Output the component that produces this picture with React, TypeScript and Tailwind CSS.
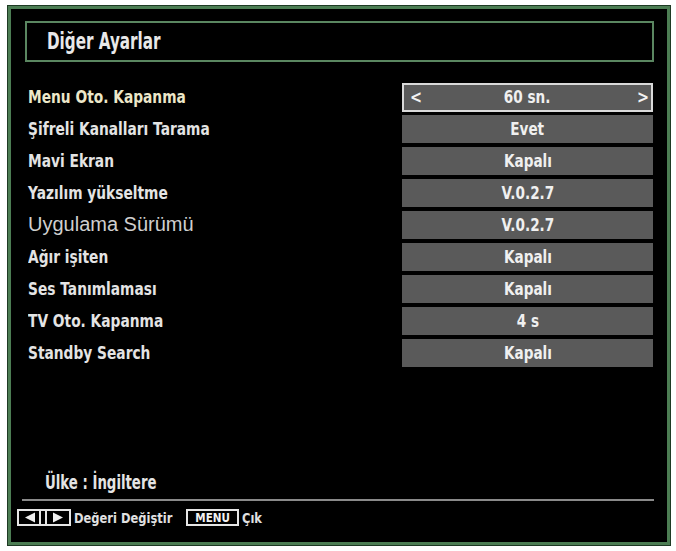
import React from 'react';

interface SettingRow {
  label: string;
  value: string;
  plain?: boolean;
}

const rows: SettingRow[] = [
  { label: 'Menu Oto. Kapanma', value: '60 sn.' },
  { label: 'Şifreli Kanalları Tarama', value: 'Evet' },
  { label: 'Mavi Ekran', value: 'Kapalı' },
  { label: 'Yazılım yükseltme', value: 'V.0.2.7' },
  { label: 'Uygulama Sürümü', value: 'V.0.2.7', plain: true },
  { label: 'Ağır işiten', value: 'Kapalı' },
  { label: 'Ses Tanımlaması', value: 'Kapalı' },
  { label: 'TV Oto. Kapanma', value: '4 s' },
  { label: 'Standby Search', value: 'Kapalı' },
];

// the OSD typeface is a tall, narrow bold face; squeeze DejaVu to get close
const osdFont = 'font-["DejaVu_Sans",sans-serif] font-bold inline-block whitespace-nowrap leading-none';

// left / right arrow key hint
const ArrowKeys: React.FC = () => (
  <svg width="54" height="17" viewBox="0 0 54 17">
    <rect x="1" y="1" width="52" height="15" fill="#000" stroke="#e6e6e6" strokeWidth="2" />
    <polygon points="8,8.5 18,3.5 18,13.5" fill="#f0f0f0" />
    <rect x="22" y="2" width="2" height="13" fill="#e6e6e6" />
    <rect x="28" y="2" width="2" height="13" fill="#e6e6e6" />
    <polygon points="46,8.5 36,3.5 36,13.5" fill="#f0f0f0" />
  </svg>
);

const App: React.FC = () => {
  return (
    <div className="w-[676px] h-[551px] bg-white pt-[5px] pl-[7px] pr-[5px] pb-[5px]">
      <div className="h-full w-full bg-[#1e3a24] p-px">
        <div className="h-full w-full border-[3px] border-[#4c7d53] bg-black flex flex-col">
          {/* header */}
          <div className="mt-[12px] ml-[14px] mr-[13px] h-[41px] border-2 border-[#5a8660] flex items-center pl-[20px]">
            <span className={`${osdFont} origin-left scale-x-[0.66] text-[23px] text-[#e8e8e8]`}>
              Diğer Ayarlar
            </span>
          </div>

          {/* settings list */}
          <div className="mt-[21px] ml-[17px] mr-[14px] flex flex-col gap-[4px]">
            {rows.map((row, i) => (
              <div key={row.label} className="flex items-center h-[28px]">
                <div className="flex-1">
                  <span
                    className={
                      row.plain
                        ? 'font-["Liberation_Sans",Arial,sans-serif] text-[20px] text-[#cfcfcf] leading-none'
                        : `${osdFont} origin-left scale-x-[0.81] text-[17px] ${
                            i === 0 ? 'text-[#ece7c9]' : 'text-[#e4e4e4]'
                          }`
                    }
                  >
                    {row.label}
                  </span>
                </div>
                <div
                  className={`w-[251px] bg-[#5a5a5a] flex items-center justify-between px-[5px] ${
                    i === 0 ? 'border-2 border-[#d9d9d9] h-[29px]' : 'h-full'
                  }`}
                >
                  <span className={`${osdFont} text-[18px] text-[#f2f2f2] w-[10px] scale-x-[0.8]`}>
                    {i === 0 ? '<' : ''}
                  </span>
                  <span className={`${osdFont} scale-x-[0.8] text-[17px] text-[#f0f0f0]`}>
                    {row.value}
                  </span>
                  <span className={`${osdFont} text-[18px] text-[#f2f2f2] w-[10px] text-right scale-x-[0.8]`}>
                    {i === 0 ? '>' : ''}
                  </span>
                </div>
              </div>
            ))}
          </div>

          <div className="flex-1" />

          {/* footer */}
          <div>
            <div className="ml-[34px] h-[22px] flex items-center">
              <span className={`${osdFont} origin-left scale-x-[0.7] text-[19px] text-[#e4e4e4]`}>
                Ülke : İngiltere
              </span>
            </div>
            <div className="mt-[6px] ml-[11px] mr-[13px] h-[2px] bg-[#8a8a8a]" />
            <div className="mt-[8px] mb-[16px] ml-[6px] flex items-center h-[17px] text-[#e0e0e0]">
              <ArrowKeys />
              <span className={`${osdFont} origin-left scale-x-[0.82] ml-[3px] text-[14px]`}>
                Değeri Değiştir
              </span>
              <span className="-ml-[8px] h-[17px] w-[53px] border-2 border-[#e6e6e6] flex items-center justify-center">
                <span className={`${osdFont} scale-x-[0.8] text-[13px] text-[#f2f2f2]`}>MENU</span>
              </span>
              <span className={`${osdFont} origin-left scale-x-[0.82] ml-[3px] text-[14px]`}>Çık</span>
            </div>
          </div>
        </div>
      </div>
    </div>
  );
};

export default App;
